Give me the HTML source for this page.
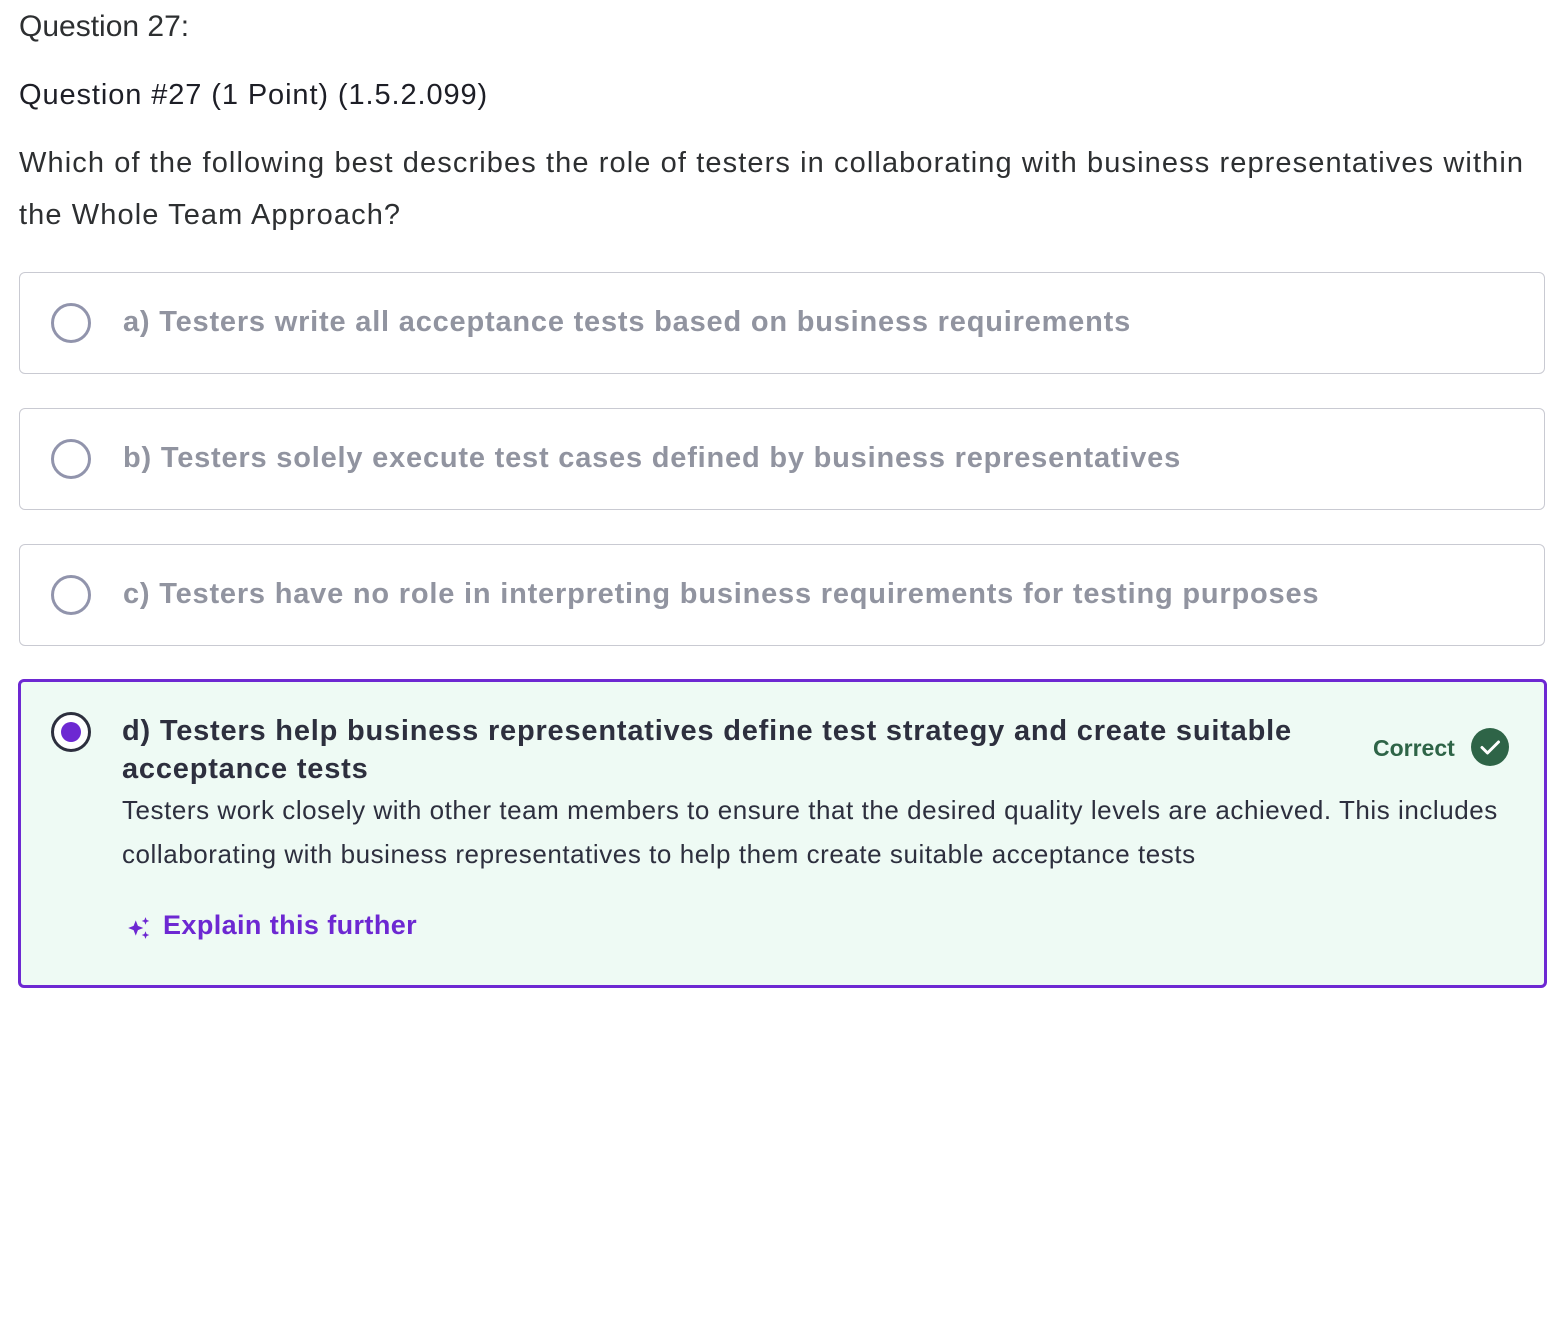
<!DOCTYPE html>
<html><head><meta charset="utf-8"><style>
body{margin:0;background:#fff;font-family:"Liberation Sans",sans-serif;color:#2d2f31;width:1566px;height:1336px;overflow:hidden;position:relative}
.t{position:absolute;left:19px;white-space:nowrap}
.opt{position:absolute;left:19px;width:1524px;height:100px;border:1px solid #c9cad2;border-radius:6px;box-sizing:content-box}
.rad{position:absolute;left:31px;top:30px;width:34px;height:34px;border:3px solid #9194ac;border-radius:50%;box-sizing:content-box}
.ol{position:absolute;left:103px;top:33px;font-size:29px;letter-spacing:0.8px;font-weight:bold;color:#9194a0;white-space:nowrap}
</style></head><body>
<div class="t" style="top:10px;font-size:30px;color:#2d2f31">Question 27:</div>
<div class="t" style="top:79px;font-size:29px;letter-spacing:0.9px;color:#1d1e26">Question #27 (1 Point) (1.5.2.099)</div>
<div class="t" style="top:137px;font-size:29px;letter-spacing:1.1px;line-height:52px;white-space:normal;width:1530px;color:#2d2f31">Which of the following best describes the role of testers in collaborating with business representatives within the Whole Team Approach?</div>

<div class="opt" style="top:272px"><div class="rad"></div><div class="ol">a) Testers write all acceptance tests based on business requirements</div></div>
<div class="opt" style="top:408px"><div class="rad"></div><div class="ol">b) Testers solely execute test cases defined by business representatives</div></div>
<div class="opt" style="top:544px"><div class="rad"></div><div class="ol">c) Testers have no role in interpreting business requirements for testing purposes</div></div>

<div style="position:absolute;left:18px;top:679px;width:1523px;height:303px;border:3px solid #6d28d2;border-radius:6px;background:#eefaf4">
 <div style="position:absolute;left:30px;top:30px;width:34px;height:34px;border:3px solid #2d2f3e;border-radius:50%;background:#fff">
  <div style="position:absolute;left:7px;top:7px;width:20px;height:20px;border-radius:50%;background:#6d28d2"></div></div>
 <div style="position:absolute;left:101px;top:30px;width:1220px;font-size:29px;letter-spacing:0.8px;font-weight:bold;line-height:38px;color:#2d2f3e">d) Testers help business representatives define test strategy and create suitable acceptance tests</div>
 <div style="position:absolute;left:1352px;top:53px;font-size:23px;font-weight:bold;color:#2e6447">Correct</div>
 <div style="position:absolute;left:1450px;top:46px;width:38px;height:38px;border-radius:50%;background:#2e6447">
  <svg width="38" height="38" viewBox="0 0 38 38"><path d="M11 19.5l5.5 5.5 11-11" stroke="#fff" stroke-width="3" fill="none" stroke-linecap="round" stroke-linejoin="round"/></svg></div>
 <div style="position:absolute;left:101px;top:106px;width:1420px;font-size:26px;letter-spacing:0.55px;line-height:44px;color:#2d2f3e">Testers work closely with other team members to ensure that the desired quality levels are achieved. This includes collaborating with business representatives to help them create suitable acceptance tests</div>
 <svg style="position:absolute;left:105px;top:233px" width="26" height="26" viewBox="0 0 24 24"><path d="M9 5l2 5 5 2-5 2-2 5-2-5-5-2 5-2z M18 2l1 2.5 2.5 1-2.5 1-1 2.5-1-2.5-2.5-1 2.5-1z M18 15l1 2.5 2.5 1-2.5 1-1 2.5-1-2.5-2.5-1 2.5-1z" fill="#6d28d2"/></svg>
 <div style="position:absolute;left:142px;top:228px;font-size:27px;letter-spacing:0.4px;font-weight:bold;color:#6d28d2">Explain this further</div>
</div>
</body></html>
